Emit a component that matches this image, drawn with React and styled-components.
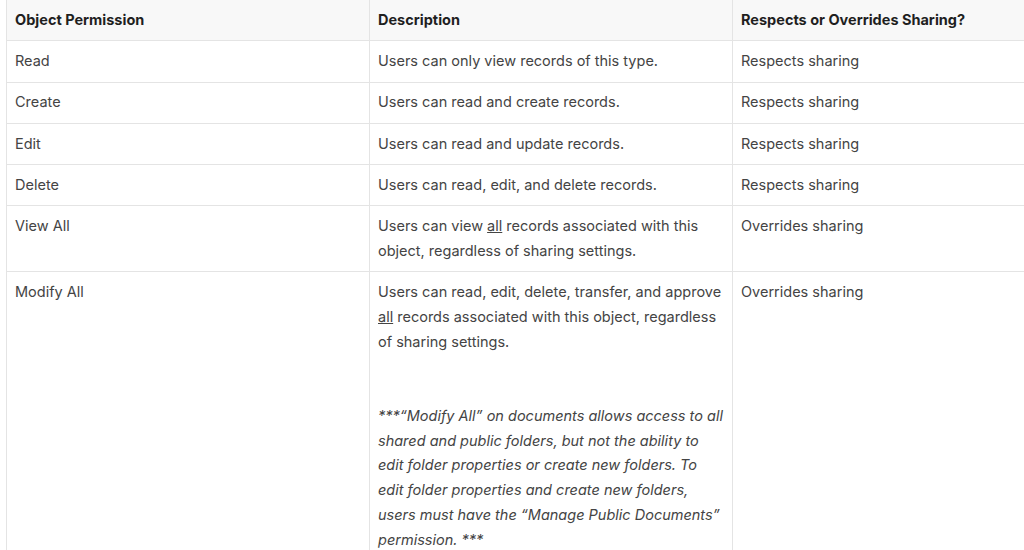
import React from "react";
import styled, { createGlobalStyle } from "styled-components";

const GlobalStyle = createGlobalStyle`
  html, body {
    margin: 0;
    padding: 0;
    background: #ffffff;
    overflow: hidden;
  }
  body {
    font-family: "Inter", "Noto Sans", sans-serif;
  }
`;

const Page = styled.div`
  padding-left: 6px;
  width: 1200px;
`;

const Table = styled.table`
  width: 1090px;
  margin-top: -1px;
  border-collapse: collapse;
  table-layout: fixed;
  font-size: 14.5px;
  line-height: 24.75px;
  color: #444444;
`;

const HeadCell = styled.th`
  background: #f8f8f8;
  border: 1px solid #e4e4e4;
  padding: 7.75px 8px;
  text-align: left;
  font-weight: 700;
  color: #1f1f1f;
  vertical-align: top;
`;

const Cell = styled.td`
  border: 1px solid #e4e4e4;
  padding: 7.75px 8px;
  vertical-align: top;
`;

const Para = styled.p`
  margin: 0;
`;

const Note = styled.p`
  margin: 49.5px 0 0;
  font-style: italic;
`;

const U = styled.span`
  text-decoration: underline;
`;

const rows = [
  ["Read", "Users can only view records of this type.", "Respects sharing"],
  ["Create", "Users can read and create records.", "Respects sharing"],
  ["Edit", "Users can read and update records.", "Respects sharing"],
  ["Delete", "Users can read, edit, and delete records.", "Respects sharing"],
];

export default function App() {
  return (
    <>
      <GlobalStyle />
      <Page>
        <Table>
          <thead>
            <tr>
              <HeadCell>Object Permission</HeadCell>
              <HeadCell>Description</HeadCell>
              <HeadCell>Respects or Overrides Sharing?</HeadCell>
            </tr>
          </thead>
          <tbody>
            {rows.map((r) => (
              <tr key={r[0]}>
                <Cell>{r[0]}</Cell>
                <Cell>{r[1]}</Cell>
                <Cell>{r[2]}</Cell>
              </tr>
            ))}
            <tr>
              <Cell>View All</Cell>
              <Cell>
                Users can view <U>all</U> records associated with this object,
                regardless of sharing settings.
              </Cell>
              <Cell>Overrides sharing</Cell>
            </tr>
            <tr>
              <Cell>Modify All</Cell>
              <Cell>
                <Para>
                  Users can read, edit, delete, transfer, and approve <U>all</U>{" "}
                  records associated with this object, regardless of sharing
                  settings.
                </Para>
                <Note>
                  ***“Modify All” on documents allows access to all shared and
                  public folders, but not the ability to edit folder properties
                  or create new folders. To edit folder properties and create
                  new folders, users must have the “Manage Public Documents”
                  permission. ***
                </Note>
              </Cell>
              <Cell>Overrides sharing</Cell>
            </tr>
          </tbody>
        </Table>
      </Page>
    </>
  );
}
